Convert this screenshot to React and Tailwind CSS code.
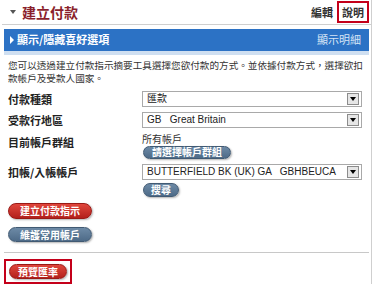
import React from "react";

const font = { fontFamily: '"Noto Sans CJK TC", "Liberation Sans", sans-serif' };

function Select({ value }) {
  return (
    <div className="h-[16px] w-[220px] border border-[#a9a9a9] bg-white flex items-center justify-between pl-[4px] pr-[2px]">
      <span className="text-[10px] leading-none text-[#222] whitespace-pre" style={{ fontFamily: '"Liberation Sans", "Noto Sans CJK TC", sans-serif' }}>
        {value}
      </span>
      <span className="w-[12px] h-[12px] border border-[#8c8c8c] bg-[#e6e6e6] flex items-center justify-center">
        <span className="w-0 h-0 border-l-[3px] border-r-[3px] border-t-[4px] border-l-transparent border-r-transparent border-t-black"></span>
      </span>
    </div>
  );
}

function Pill({ children, color, className = "" }) {
  const bg =
    color === "red"
      ? "bg-gradient-to-b from-[#e0463c] to-[#b3201c] border-[#9a1a16]"
      : "bg-gradient-to-b from-[#6d8aa6] to-[#4e6b88] border-[#415a73]";
  return (
    <div
      className={`inline-flex items-center justify-center rounded-full border text-white font-bold text-[10px] leading-none shadow-[1px_1px_2px_rgba(0,0,0,0.3)] ${bg} ${className}`}
    >
      {children}
    </div>
  );
}

export default function App() {
  return (
    <div className="w-[376px] h-[284px] bg-white overflow-hidden" style={font}>
      <div className="ml-[2px] w-[370px] h-[284px] border-r border-[#cfcfcf] flex flex-col">
        {/* header */}
        <div className="h-[26px] flex items-center justify-between border-b border-[#cfcfcf] pl-[8px] pr-[2px] mt-[1px]">
          <div className="flex items-center gap-[6px]">
            <span className="w-0 h-0 border-l-[3px] border-r-[3px] border-t-[4px] border-l-transparent border-r-transparent border-t-[#555]"></span>
            <span className="text-[14px] font-bold text-[#8a1f2c] leading-none">建立付款</span>
          </div>
          <div className="flex items-center gap-[4px]">
            <span className="text-[11px] font-bold text-[#333] leading-none">編輯</span>
            <span className="border-2 border-[#c4001a] h-[22px] flex items-center px-[3px] text-[11px] font-bold text-[#333] leading-none">
              說明
            </span>
          </div>
        </div>

        {/* preferences bar */}
        <div className="mt-[4px] mx-[2px]">
          <div className="h-[22px] bg-[#2c72c5] flex items-center justify-between pl-[6px] pr-[8px]">
            <div className="flex items-center gap-[3px]">
              <span className="w-0 h-0 border-t-[4px] border-b-[4px] border-l-[4px] border-t-transparent border-b-transparent border-l-white"></span>
              <span className="text-[11px] font-bold text-white leading-none">顯示/隱藏喜好選項</span>
            </div>
            <span className="text-[11px] text-[#d5e4f6] leading-none">顯示明細</span>
          </div>
          <div className="h-[4px] bg-[#cfdff1]"></div>
        </div>

        <p className="px-[6px] mt-[4px] text-[9.6px] leading-[13px] text-[#333] whitespace-nowrap">
          您可以透過建立付款指示摘要工具選擇您欲付款的方式。並依據付款方式，選擇欲扣
          <br />
          款帳戶及受款人國家。
        </p>

        <div className="px-[6px] mt-[6px] grid grid-cols-[134px_1fr] gap-y-[5px] items-center">
          <span className="text-[11px] font-bold text-[#222]">付款種類</span>
          <Select value="匯款" />
          <span className="text-[11px] font-bold text-[#222]">受款行地區</span>
          <Select value="GB   Great Britain" />
          <span className="text-[11px] font-bold text-[#222] self-start">目前帳戶群組</span>
          <div className="flex flex-col items-start -mt-[1px]">
            <span className="text-[10px] leading-[12px] text-[#333]">所有帳戶</span>
            <Pill className="h-[13px] mt-[1px] ml-[1px] px-[8px]">請選擇帳戶群組</Pill>
          </div>
          <span className="text-[11px] font-bold text-[#222]">扣帳/入帳帳戶</span>
          <Select value="BUTTERFIELD BK (UK) GA   GBHBEUCA" />
          <span></span>
          <div className="flex -mt-[2px]">
            <Pill className="h-[14px] ml-[1px] px-[7px]">搜尋</Pill>
          </div>
        </div>

        <div className="px-[6px] mt-[6px] flex flex-col items-start gap-[8px]">
          <Pill color="red" className="h-[16px] px-[11px] text-[10.5px]">建立付款指示</Pill>
          <Pill className="h-[15px] px-[11px] text-[10.5px]">維護常用帳戶</Pill>
        </div>

        <div className="mx-[2px] mt-[10px] border-t border-[#c8c8c8]"></div>

        <div className="ml-[2px] mt-[6px] self-start border-2 border-[#c4001a] px-[3px] py-[3px] flex">
          <Pill color="red" className="h-[15px] px-[8px] text-[10.5px]">預覽匯率</Pill>
        </div>
      </div>
    </div>
  );
}
